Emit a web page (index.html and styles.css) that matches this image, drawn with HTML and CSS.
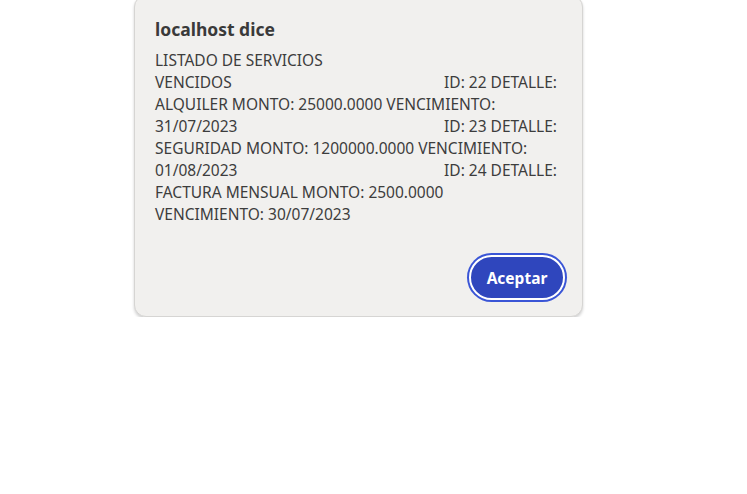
FILE: index.html
```html
<!DOCTYPE html>
<html lang="es">
<head>
    <meta charset="UTF-8">
    <meta name="viewport" content="width=device-width, initial-scale=1.0">
    <title>localhost dice</title>
    <link rel="stylesheet" href="styles.css">
</head>
<body>
    <div class="dialog">
        <h3 class="title">localhost dice</h3>
        <div class="message">
            <div class="line">LISTADO DE SERVICIOS</div>
            <div class="line split"><span>VENCIDOS</span><span>ID: 22 DETALLE:</span></div>
            <div class="line">ALQUILER MONTO: 25000.0000 VENCIMIENTO:</div>
            <div class="line split"><span>31/07/2023</span><span>ID: 23 DETALLE:</span></div>
            <div class="line">SEGURIDAD MONTO: 1200000.0000 VENCIMIENTO:</div>
            <div class="line split"><span>01/08/2023</span><span>ID: 24 DETALLE:</span></div>
            <div class="line">FACTURA MENSUAL MONTO: 2500.0000</div>
            <div class="line">VENCIMIENTO: 30/07/2023</div>
        </div>
        <div class="actions">
            <button class="ok">Aceptar</button>
        </div>
    </div>
</body>
</html>
```

FILE: styles.css
```css
body {
    margin: 0;
    background: #ffffff;
    font-family: "Noto Sans", "Open Sans", sans-serif;
    color: #3d3d3d;
}
.dialog {
    box-sizing: border-box;
    width: 449px;
    margin: -5px 0 0 134px;
    padding: 22px 17px 16px 20px;
    background: #f1f0ee;
    border: 1px solid #d6d5d3;
    border-radius: 12px;
    box-shadow: 0 2px 3px rgba(0, 0, 0, 0.18);
}
.title {
    margin: 0;
    font-size: 17.5px;
    line-height: 22px;
    font-weight: bold;
    color: #3a3a3a;
}
.message {
    width: 402px;
    margin-top: 9px;
    font-size: 15.5px;
    line-height: 22px;
}
.split {
    display: flex;
    justify-content: space-between;
}
.actions {
    display: flex;
    justify-content: flex-end;
    margin-top: 30px;
}
.ok {
    width: 96px;
    height: 45px;
    padding: 0;
    background: #2f46bd;
    color: #ffffff;
    font-family: inherit;
    font-size: 15.5px;
    font-weight: bold;
    border: 2px solid #ffffff;
    border-radius: 23px;
    box-shadow: 0 0 0 2px #3a55d6;
    cursor: pointer;
}
```
